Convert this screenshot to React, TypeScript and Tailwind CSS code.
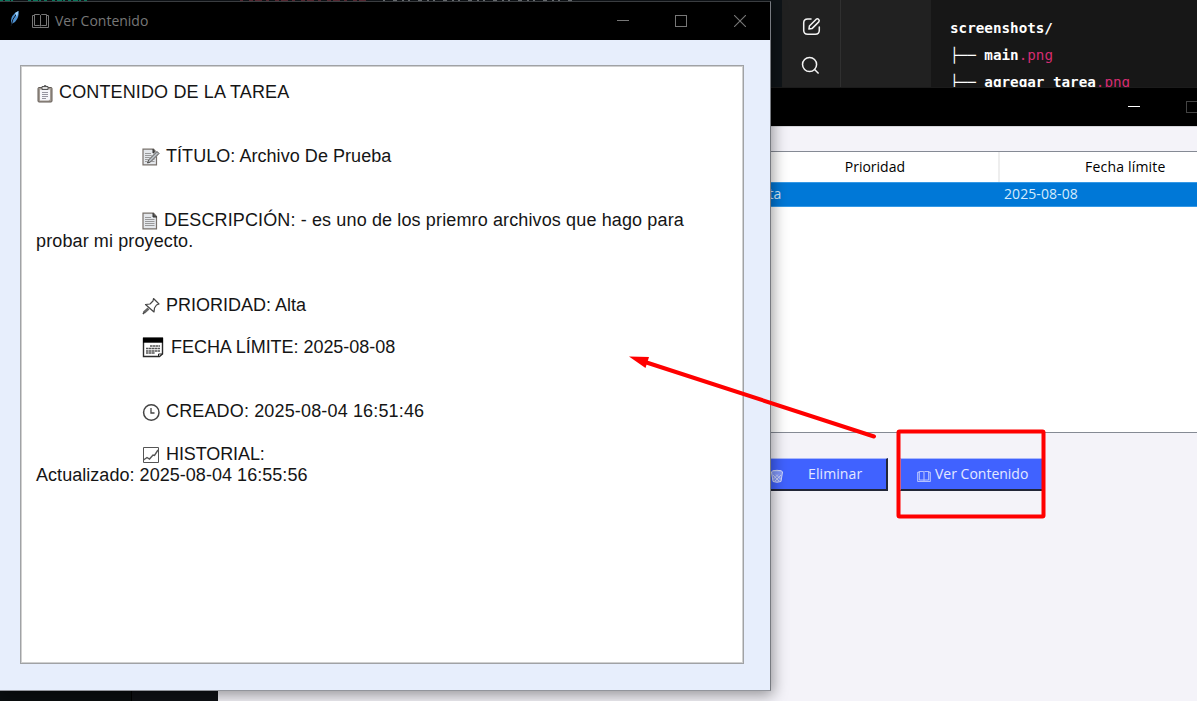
import type { ReactNode } from "react";

function Book({ className }: { className: string }) {
  return (
    <svg viewBox="0 0 17 14" fill="none" stroke="currentColor" className={className}>
      <path d="M2.500 11.500V.5H7.500L8.500 1.500L9.500 .5H14.500V11.500H9.500L8.500 12L7.500 11.500H2.500M8.500 1.500V12" />
      <path d="M2.500 1.500H.5V13.500H16.500V1.500H14.500" />
    </svg>
  );
}

function Clipboard() {
  return (
    <svg viewBox="0 0 16 18" className="h-[18px] w-4" fill="none">
      <rect x="1" y="2.500" width="14" height="14.500" rx="1" fill="#a39b93" stroke="#625b55" />
      <path d="M3 4.500h10v10l-1.500 1H3z" fill="#f5f6fa" />
      <path d="M5 1.500h6v3H5zM7 0.700h2v1" fill="#ddd" stroke="#555" />
      <path d="M5 7.500h6M5 9.500h6M5 11.500h6M5 13.500h4" stroke="#8a8a96" strokeWidth=".9" />
    </svg>
  );
}

function Page({ pencil = false }: { pencil?: boolean }) {
  return (
    <svg viewBox="0 0 18 18" className="h-[18px] w-[18px]" fill="none">
      <path d="M1 1.200h10.500l3 3.300v12.300H1z" fill="#e4e7eb" stroke="#77706b" strokeWidth="1.200" />
      <path d="M11 1v4h4" fill="#555" stroke="#333" />
      <path d="M3 5.500h6M3 7.500h9.500M3 9.500h9.500M3 11.500h9.500M3 13.500h9.500" stroke="#858585" strokeWidth=".8" />
      {pencil && (
        <>
          <path d="M6 14.500L15.500 4.500" stroke="#eee" strokeWidth="4" />
          <path d="M5.500 15L6.500 12L15 3.500L17 5.500L8.500 14Z" fill="#b8bdc2" stroke="#484848" />
        </>
      )}
    </svg>
  );
}

function Pin() {
  return (
    <svg viewBox="0 0 18 18" className="h-[18px] w-[18px]" fill="none" stroke="#444" strokeWidth="1.200">
      <path d="M11.500 1.500L17 7L14.500 8L12.500 11L12 15L3.500 7.500L8 7L11 4Z" strokeLinejoin="round" />
      <path d="M6.500 11.500L2 15.500" stroke="#666" strokeWidth="2.800" />
      <path d="M2.500 15L1 17" strokeWidth="1.500" />
    </svg>
  );
}

function Calendar() {
  return (
    <svg viewBox="0 0 22 21" className="h-[21px] w-[22px]" fill="none">
      <path d="M1.500 1.500H20.500V17L17.500 19.500H1.500Z" stroke="#2b2b2b" fill="#fff" strokeWidth="1.400" />
      <path d="M1 0.500h20v5.200H1z" fill="#000" />
      <path d="M8 9h10M4 11.500h14M4 14h14M4 16h9" stroke="#555" strokeWidth="1.700" strokeDasharray="2.500 .4" />
      <path d="M16.500 19.500V17H20.500" stroke="#222" />
    </svg>
  );
}

function Clock() {
  return (
    <svg viewBox="0 0 18 18" className="h-[18px] w-[18px]" fill="none" stroke="#444">
      <circle cx="9.300" cy="8.500" r="7.700" strokeWidth="1.500" />
      <path d="M9 4V9H12.500" strokeWidth="1.300" />
    </svg>
  );
}

function Chart() {
  return (
    <svg viewBox="0 0 18 18" className="h-[18px] w-[18px]" fill="none" stroke="#555">
      <path d="M1.500 1.500h15v15h-15z" />
      <path d="M1.500 14L5 11.500L7.500 13L11 9L12.500 9.500L16 4" strokeWidth="1.400" />
    </svg>
  );
}

function Trash() {
  return (
    <svg viewBox="0 0 14 14" className="mt-[3px] h-[14px] w-[14px] shrink-0" fill="none" stroke="#d5dcfd">
      <ellipse cx="7" cy="3" rx="5.500" ry="1.700" fill="#8fa4fb" />
      <path d="M1.500 3L3 12.500Q7 14 11 12.500L12.500 3" fill="#8298fb" />
      <path d="M3 6l6 6M6 5.500l5 5M11 6l-6 6M8 5.500l-5 5" strokeWidth=".8" />
    </svg>
  );
}

function Row({ icon, iconBox, children, indent = true }: { icon?: ReactNode; iconBox?: string; children: ReactNode; indent?: boolean }) {
  return (
    <div className={indent ? "flex h-[21.28px] items-center pl-[106px]" : "flex h-[21.28px] items-center"}>
      {icon && <span className={iconBox}>{icon}</span>}
      {children}
    </div>
  );
}

const Blank = () => <div className="h-[21.28px]" />;

function ChatBackdrop() {
  return (
    <div className="flex h-[88px] bg-[#0f1418] pl-[782px]">
      <div className="flex w-[59px] flex-col items-center gap-5 border-r border-[#303030] bg-[#212121] pt-[17px] text-[#f3f3f3]">
        <svg viewBox="0 0 20 20" fill="none" stroke="currentColor" strokeWidth="1.600" className="h-[19px] w-[19px]">
          <path d="M9.500 2H6Q1.800 2 1.800 6V14Q1.800 18.200 6 18.200H14Q18.200 18.200 18.200 14V10.500" strokeLinecap="round" />
          <path d="M7.300 12.700L7.800 9.500L15 2.300Q16.400 1.400 17.600 2.600Q18.700 3.800 17.700 5.100L10.500 12.200Z" strokeLinejoin="round" />
        </svg>
        <svg viewBox="0 0 20 20" fill="none" stroke="currentColor" strokeWidth="1.600" className="mr-px h-[19px] w-[19px]">
          <circle cx="9" cy="9" r="7.400" />
          <path d="M14.300 14.300L18.500 18.500" />
        </svg>
      </div>
      <div className="w-[90px] bg-[#212121]" />
      <div className="flex-1 overflow-hidden whitespace-pre bg-[#171717] pl-[19px] pt-[15px] font-['DejaVu_Sans_Mono',monospace] text-[14.250px] leading-[27.200px] text-white">
        <div className="font-bold">screenshots/</div>
        <div>├── <b>main</b><span className="text-[#d52c71]">.png</span></div>
        <div>├── <b>agregar_tarea</b><span className="text-[#d52c71]">.png</span></div>
      </div>
    </div>
  );
}

function TaskWindow() {
  return (
    <div className="absolute left-[218px] top-[87px] h-[614px] w-[979px] overflow-hidden border-t border-[#1b1b1b] bg-[#f4f3f9] font-['Open_Sans',sans-serif] text-sm">
      <div className="flex h-[38px] items-start justify-end bg-black">
        <div className="mr-[46px] mt-[18px] h-px w-3 bg-white" />
        <div className="-mr-px mt-[13px] h-3 w-3 border border-[#444]" />
      </div>
      <div className="h-[25px] border-t border-[#d5d5da]" />
      <div className="h-[282px] border-b border-t border-[#858a94] bg-white">
        <div className="flex h-[30px] items-center text-black">
          <div className="flex h-full w-[782px] items-center justify-end border-r-2 border-[#eeeeee] pr-[93px]">Prioridad</div>
          <div className="whitespace-nowrap pl-[85px] tracking-[0.200px]">Fecha límite</div>
        </div>
        <div className="flex h-[25px] items-center border-b border-t border-[#3599e6] bg-[#0078d7] pb-px pl-[538px] text-[#d5ebfc]">
          <span className="w-[248px]">Alta</span>
          <span className="whitespace-nowrap tracking-[0.080px]">2025-08-08</span>
        </div>
      </div>
      <div className="flex gap-3 pl-[515px] pt-[25px] text-[#e3e8ff]">
        <div className="flex h-[33px] w-[155px] items-center border-b-2 border-r-2 border-t border-b-[#222638] border-r-[#222638] border-t-[#a9b7fb] bg-[#4062ff] pl-[37px]">
          <Trash />
          <span className="ml-6 tracking-[0.100px]">Eliminar</span>
        </div>
        <div className="flex h-[33px] w-[144px] items-center whitespace-nowrap border-b-2 border-l border-t border-b-[#222638] border-l-[#a9b7fb] border-t-[#a9b7fb] bg-[#4062ff] pl-4">
          <Book className="mt-[4px] h-[11px] w-[14px]" />
          <span className="ml-[4px]">Ver Contenido</span>
        </div>
      </div>
    </div>
  );
}

function ContentWindow() {
  return (
    <div className="absolute left-0 top-[1px] h-[690px] w-[771px] border-b border-r border-t border-b-[#92959c] border-r-[#777a80] border-t-[#3a3d40] bg-[#e7eefc] shadow-[2px_4px_14px_rgba(0,0,0,0.400)]">
      <div className="flex h-[38px] items-center bg-black font-['Open_Sans',sans-serif] text-sm text-[#777]">
        <svg viewBox="0 0 12 18" className="ml-[8px] h-[18px] w-3 -translate-y-[2px]">
          <path d="M3.500 14Q1.500 8 7 3L10.500 1Q11.500 7 7 12Z" fill="#4d90d0" />
          <path d="M3 16Q4 9 8.500 4" stroke="#111820" fill="none" />
          <path d="M7 3L10.500 1L9 7" fill="#9ed0f8" />
        </svg>
        <Book className="ml-[12px] h-[14px] w-[17px]" />
        <span className="ml-[6px] pb-px">Ver Contenido</span>
        <div className="ml-auto mr-6 flex items-center gap-[46px] pb-px">
          <div className="h-px w-3 bg-[#777]" />
          <div className="h-3 w-3 border border-[#777]" />
          <svg viewBox="0 0 12 12" className="ml-[1px] h-3 w-3" stroke="#777" strokeWidth="1.100"><path d="M0 0L12 12M12 0L0 12" /></svg>
        </div>
      </div>
      <div className="ml-[20px] mt-[25px] h-[599px] w-[724px] whitespace-nowrap border border-[#a0a2a5] bg-white pl-[15px] pt-4 font-['Liberation_Sans',sans-serif] text-lg leading-[21.280px] text-[#151515] shadow-[inset_0_0_0_1px_#d0d0d0]">
        <Row indent={false} iconBox="w-[23px] pl-px pt-[2px]" icon={<Clipboard />}><span className="tracking-[0.140px]">CONTENIDO DE LA TAREA</span></Row>
        <Blank /><Blank />
        <Row iconBox="w-[24px] pt-[2px]" icon={<Page pencil />}><span className="tracking-[0.050px]">TÍTULO: Archivo De Prueba</span></Row>
        <Blank /><Blank />
        <Row iconBox="w-[22px] pt-[2px]" icon={<Page />}><span className="tracking-[0.130px]">DESCRIPCIÓN: - es uno de los priemro archivos que hago para</span></Row>
        <Row indent={false}><span className="tracking-[0.120px]">probar mi proyecto.</span></Row>
        <Blank /><Blank />
        <Row iconBox="w-[24px] pt-[2px]" icon={<Pin />}><span>PRIORIDAD: Alta</span></Row>
        <Blank />
        <Row iconBox="w-[29px] pb-px" icon={<Calendar />}><span className="tracking-[-0.040px]">FECHA LÍMITE: 2025-08-08</span></Row>
        <Blank /><Blank />
        <Row iconBox="w-[24px] pt-[2px]" icon={<Clock />}><span className="tracking-[0.150px]">CREADO: 2025-08-04 16:51:46</span></Row>
        <Blank />
        <Row iconBox="w-[24px] pt-[2px]" icon={<Chart />}><span className="tracking-[-0.100px]">HISTORIAL:</span></Row>
        <Row indent={false}><span className="tracking-[0.040px]">Actualizado: 2025-08-04 16:55:56</span></Row>
      </div>
    </div>
  );
}

export default function App() {
  return (
    <div className="relative h-[701px] w-[1197px] overflow-hidden bg-[#0f1115]">
      <ChatBackdrop />
      <div className="h-[613px] w-[132px] border-r border-black bg-[#0a0e0f]" />
      <TaskWindow />
      <ContentWindow />
      <svg className="absolute left-0 top-0 h-[701px] w-[1197px]" fill="none">
        <path d="M0 .5H16M28 .5H47M52 .5H88" stroke="#08775c" strokeDasharray="3 2 5 1 2 3" />
        <path d="M240 .5H370" stroke="#552630" strokeDasharray="3 6 4 2 7 4" />
        <path d="M383 .5H572" stroke="#65696d" strokeDasharray="2 8 4 5 2 4" />
        <path d="M645 362L874 436.500" stroke="#ff0000" strokeWidth="4" strokeLinecap="round" />
        <path d="M629 356.500L649 357L645.500 368Z" fill="#ff0000" />
        <rect x="898.500" y="431.500" width="145" height="85" rx="1" stroke="#ff0000" strokeWidth="4" />
      </svg>
    </div>
  );
}
